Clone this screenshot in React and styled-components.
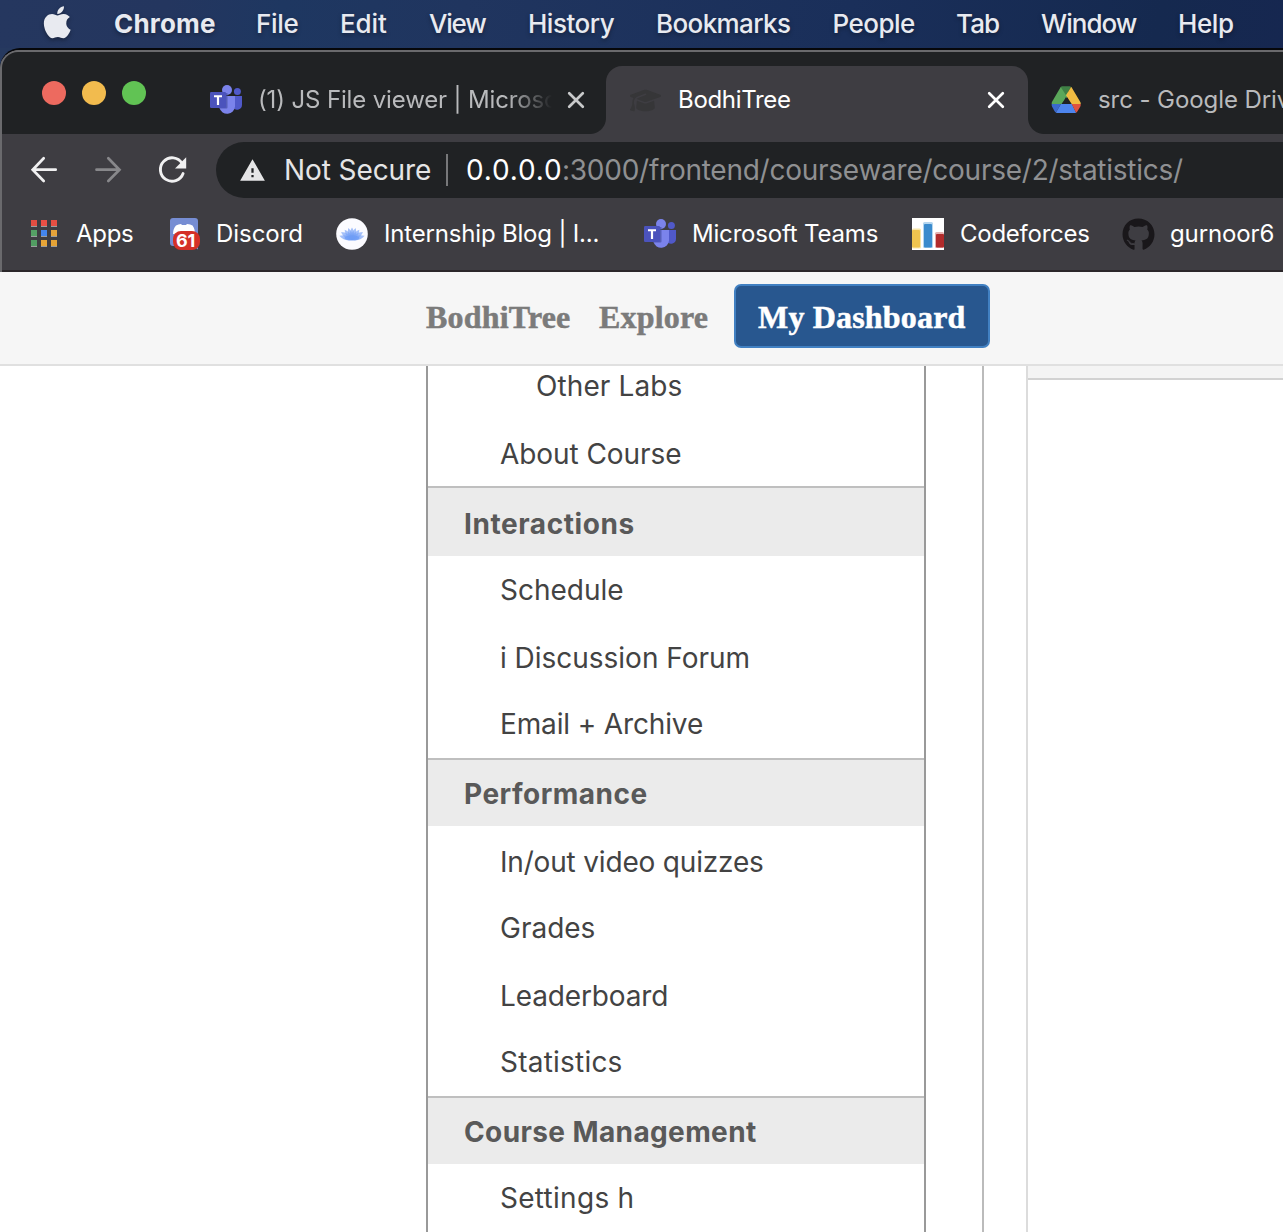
import React from 'react';
import styled, { createGlobalStyle } from 'styled-components';
import { FaApple, FaGithub } from 'react-icons/fa';
import { FaGraduationCap } from 'react-icons/fa6';
import { MdWarning } from 'react-icons/md';

const GlobalStyle = createGlobalStyle`
  *, *::before, *::after { box-sizing: border-box; }
  html, body { margin: 0; height: 1232px; overflow: hidden; }
  body { background: #fff; font-family: Inter, "Liberation Sans", sans-serif; -webkit-font-smoothing: antialiased; }
`;

const Screen = styled.div`
  width: 1283px;
  height: 1232px;
  overflow: hidden;
  display: flex;
  flex-direction: column;
`;

/* ---------- system menu bar ---------- */
const MenuBar = styled.header`
  flex: none;
  height: 48px;
  display: flex;
  align-items: center;
  padding-left: 39px;
  color: #e8eaf0;
  background: linear-gradient(100deg, #25375f 0%, #24365f 13%, #1e3761 22%, #20355f 36%, #1a2f5a 66%, #15294f 90%, #162750 100%);
`;

const AppleSlot = styled.div`
  flex: none;
  width: 75px;
  height: 48px;
  padding-top: 4px;
  svg { display: block; filter: drop-shadow(0 2px 2px rgba(0, 0, 0, 0.35)); }
`;

const MenuItem = styled.span`
  flex: none;
  width: ${(p) => p.$w}px;
  white-space: nowrap;
  font-size: 26px;
  line-height: 48px;
  height: 48px;
  font-weight: ${(p) => (p.$strong ? 700 : 500)};
  letter-spacing: ${(p) => p.$ls}px;
  text-shadow: 0 2px 4px rgba(0, 0, 0, 0.35);
`;

/* ---------- browser window ---------- */
const Backdrop = styled.div`
  flex: 1;
  min-height: 0;
  display: flex;
  background: #26395f;
`;

const BrowserWindow = styled.div`
  flex: 1;
  min-width: 0;
  display: flex;
  flex-direction: column;
  border-top: 2px solid #06070a;
  border-top-left-radius: 20px;
  background: #68686b;
  overflow: hidden;
`;

const Chrome = styled.div`
  flex: none;
  height: 222px;
  padding: 2px 0 0 2px;
  display: flex;
  flex-direction: column;
  background: #6a6a6d;
  border-top-left-radius: 18px;
`;

const TabStrip = styled.div`
  flex: none;
  height: 82px;
  display: flex;
  align-items: flex-end;
  background: #202224;
  border-top-left-radius: 16px;
  overflow: hidden;
`;

const TrafficLights = styled.div`
  flex: none;
  width: 208px;
  height: 82px;
  padding: 29px 0 0 40px;
  display: flex;
  gap: 16px;
`;

const Light = styled.i`
  width: 24px;
  height: 24px;
  border-radius: 50%;
  background: ${(p) => p.$color};
`;

const Tab = styled.div`
  flex: none;
  width: ${(p) => p.$w}px;
  height: 68px;
  display: flex;
  align-items: center;
  color: ${(p) => (p.$active ? '#fff' : '#b9babc')};
  background: ${(p) => (p.$active ? '#3e3d42' : 'transparent')};
  border-radius: 16px 16px 0 0;
  padding-left: ${(p) => p.$pl}px;
`;

const Flare = styled.i`
  flex: none;
  align-self: flex-end;
  width: 16px;
  height: 16px;
  background: radial-gradient(circle at ${(p) => (p.$right ? '100% 0' : '0 0')}, transparent 15.5px, #3e3d42 16.5px);
`;

const TabTitle = styled.span`
  flex: none;
  width: ${(p) => p.$w}px;
  overflow: hidden;
  white-space: nowrap;
  font-size: 24px;
  line-height: 40px;
  letter-spacing: ${(p) => p.$ls}px;
  margin-left: ${(p) => p.$ml}px;
  ${(p) => p.$fade && 'mask-image: linear-gradient(90deg, #000 calc(100% - 44px), transparent 100%);'}
`;

const CloseIcon = styled.svg`
  flex: none;
  display: block;
  width: 18px;
  height: 18px;
  margin-left: ${(p) => p.$ml}px;
`;

const Toolbar = styled.div`
  flex: none;
  height: 72px;
  display: flex;
  align-items: center;
  padding-left: 20px;
  background: #3e3d42;
`;

const NavButton = styled.span`
  flex: none;
  width: 64px;
  height: 44px;
  display: flex;
  align-items: center;
  padding-left: ${(p) => p.$pl}px;
  color: ${(p) => (p.$dim ? '#88888b' : '#f0f0f1')};
`;

const Omnibox = styled.div`
  flex: 1;
  height: 56px;
  margin-left: 2px;
  padding-left: 23px;
  display: flex;
  align-items: center;
  border-radius: 28px 0 0 28px;
  background: #202224;
  font-size: 28px;
  line-height: 57px;
  white-space: nowrap;
  color: #e5e5e6;
`;

const Security = styled.span`
  width: 152px;
  margin-left: 18px;
  letter-spacing: -0.09px;
`;

const Divider = styled.i`
  width: 2px;
  height: 32px;
  margin: 0 18px 0 10px;
  background: #77787a;
`;

const Host = styled.span`
  flex: none;
  width: 96px;
  color: #fff;
  letter-spacing: 0.85px;
`;

const Path = styled.span`
  color: #8f9092;
  letter-spacing: -0.25px;
`;

const Bookmarks = styled.div`
  flex: none;
  height: 66px;
  display: flex;
  padding-left: 28px;
  background: #3e3d42;
  border-bottom: 2px solid #2b272a;
`;

const Bookmark = styled.div`
  flex: none;
  width: ${(p) => p.$w}px;
  height: 56px;
  display: flex;
  align-items: center;
  gap: ${(p) => p.$gap || 16}px;
  color: #fff;
  white-space: nowrap;
  svg { flex: none; display: block; }
`;

const BookmarkLabel = styled.span`
  height: 56px;
  font-size: 24px;
  line-height: 56px;
  letter-spacing: ${(p) => p.$ls}px;
`;

/* ---------- page ---------- */
const Page = styled.main`
  flex: 1;
  min-height: 0;
  display: flex;
  flex-direction: column;
  background: #fff;
`;

const SiteNav = styled.nav`
  flex: none;
  height: 94px;
  padding: 12px 0 0 426px;
  display: flex;
  align-items: flex-start;
  background: #f6f6f6;
  border-bottom: 2px solid #e0e0e0;
  font-family: "Liberation Serif", "Times New Roman", serif;
  font-weight: 700;
  font-size: 32px;
  line-height: 66px;
  color: #7b7b7b;
  white-space: nowrap;
`;

const SiteLink = styled.span`
  flex: none;
  width: ${(p) => p.$w}px;
  letter-spacing: 0.18px;
  -webkit-text-stroke: 0.5px currentColor;
`;

const DashboardButton = styled.span`
  flex: none;
  width: 256px;
  height: 64px;
  padding-left: 22px;
  border: 2px solid #4180c2;
  border-radius: 7px;
  background: #28578f;
  color: #fff;
  line-height: 62px;
  letter-spacing: 0.18px;
  -webkit-text-stroke: 0.5px currentColor;
`;

const Columns = styled.div`
  flex: 1;
  min-height: 0;
  display: flex;
  padding-left: 426px;
`;

const Sidebar = styled.aside`
  flex: none;
  width: 500px;
  display: flex;
  flex-direction: column;
  border-left: 2px solid #999;
  border-right: 2px solid #999;
`;

const SideLink = styled.span`
  flex: none;
  height: ${(p) => p.$h}px;
  padding-left: ${(p) => (p.$sub ? 108 : 72)}px;
  padding-top: ${(p) => p.$pt}px;
  font-size: 28px;
  line-height: 40px;
  letter-spacing: ${(p) => p.$ls}px;
  color: #434343;
  white-space: nowrap;
`;

const SideHeading = styled.strong`
  flex: none;
  height: ${(p) => p.$h}px;
  padding-left: 36px;
  padding-top: ${(p) => p.$pt}px;
  border-top: 2px solid #bfbfbf;
  background: #ebebeb;
  font-size: 28px;
  line-height: 40px;
  font-weight: 700;
  letter-spacing: ${(p) => p.$ls}px;
  color: #595959;
  white-space: nowrap;
`;

const Content = styled.section`
  flex: 1;
  display: flex;
  margin-left: 56px;
  padding-left: 42px;
  border-left: 2px solid #bbb;
`;

const Panel = styled.div`
  flex: 1;
  border-left: 2px solid #dcdcdc;
`;

const PanelHeader = styled.div`
  height: 14px;
  background: #f4f4f4;
  border-bottom: 2px solid #d2d2d2;
`;

/* ---------- icons ---------- */
const Teams = () => (
  <svg width="32" height="32" viewBox="0 0 32 32">
    <circle cx="27.4" cy="7.4" r="3.5" fill="#5059c9" />
    <path d="M23 12h9v8.8a5 5 0 0 1-9 3z" fill="#5059c9" />
    <circle cx="17" cy="6" r="5" fill="#7b83eb" />
    <path d="M9.5 12H25v10.5a7.9 7.9 0 0 1-15.500 1.500z" fill="#7b83eb" />
    <path d="M9 9h8.500v14.500a1 1 0 0 1-1 1H9.500z" fill="#4750a4" opacity="0.7" />
    <rect y="8" width="16" height="16" rx="1.300" fill="#4b53bc" />
    <path d="M4 11.300h8v2H9.100V21H6.900v-7.700H4z" fill="#fff" />
  </svg>
);

const Drive = () => (
  <svg width="30" height="28" viewBox="0 0 30 28">
    <path d="M9.700 1h5.300l2.900 8.500-7.400 8.500H.7c-.2-.8 0-1.500.4-2.200z" fill="#5aa75a" />
    <path d="M9.700 1q.6-.7 1.500-.7h7.400q.9 0 1.500.7L15 9.300z" fill="#3f8045" />
    <path d="M20.100 1q.6.300.9.900l8.300 14c.4.700.6 1.400.4 2.100h-9L15 9.300z" fill="#f0bb42" />
    <path d="M.7 18h9.200l-5 8.500c-.6-.3-1-.7-1.300-1.200l-2.500-4.500Q.5 19.700.7 18z" fill="#3b69cd" />
    <path d="M9.900 18h11l4.200 8.700q-.6.300-1.400.3H6.600q-1 0-1.700-.5z" fill="#4d84ed" />
    <path d="M20.700 18h9q.2 1.500-.5 2.700l-2.700 4.600q-.5.900-1.400 1.400z" fill="#df5340" />
    <path d="M15 11l4.200 7h-8.400z" fill="#202224" />
  </svg>
);

const APP_COLORS = ['#e34d42', '#ea4f45', '#e64f43', '#55a065', '#4385ee', '#e5a33a', '#519d62', '#e7a537', '#e5a336'];
const Apps = () => (
  <svg width="28" height="28" viewBox="0 0 28 28">
    {APP_COLORS.map((c, i) => (
      <g key={i}>
        <rect x={1 + (i % 3) * 10} y={Math.floor(i / 3) * 10} width="6" height="7" fill="#9b9d9e" />
        <rect x={1 + (i % 3) * 10} y={Math.floor(i / 3) * 10} width="6" height="6" fill={c} />
      </g>
    ))}
  </svg>
);

const DiscordBadge = () => (
  <svg width="32" height="32" viewBox="0 0 32 32">
    <path d="M5 0h22a3 3 0 0 1 3 3v28.500l-5-3.500H5a3 3 0 0 1-3-3V3a3 3 0 0 1 3-3z" fill="#768dd3" />
    <path d="M8 7.500q2.500-1.500 5-1.500l1 1h4l1-1q3.500 0 5.500 1.500 2.500 3 2.500 8.500H5q0-5.500 3-8.500z" fill="#fff" />
    <rect x="5" y="13" width="27" height="19" rx="8" fill="#d43027" />
    <text x="17.500" y="29" textAnchor="middle" fontFamily="Inter, sans-serif" fontWeight="700" fontSize="18" letterSpacing="-0.2" fill="#fff">61</text>
  </svg>
);

const PETALS = [[-74, 1.1], [74, 1.1], [-56, 1.1], [56, 1.1], [-37, 1.02], [37, 1.02], [-18, 1], [18, 1], [0, 1]];
const Lotus = () => (
  <svg width="32" height="32" viewBox="0 0 32 32">
    <defs>
      <linearGradient id="petal" x1="0" y1="0" x2="0" y2="1">
        <stop offset="0" stopColor="#8fb2f8" />
        <stop offset="1" stopColor="#6394f5" />
      </linearGradient>
    </defs>
    <circle cx="16" cy="16" r="15.800" fill="#fbfbff" />
    {PETALS.map(([a, k]) => (
      <path key={a} transform={`translate(16 21.500) rotate(${a}) scale(${k})`} d="M0 .8C-3-3-2.600-8 0-12 2.600-8 3-3 0 .8z" fill="url(#petal)" fillOpacity="0.75" />
    ))}
    <ellipse cx="16" cy="20" rx="7.500" ry="2.600" fill="#6f9df6" opacity="0.8" />
  </svg>
);

const Codeforces = () => (
  <svg width="32" height="32" viewBox="0 0 32 32">
    <rect width="32" height="32" fill="#fff" />
    <rect x="0" y="10.500" width="9" height="20" rx="1.500" fill="#f8e6a9" />
    <rect x="0" y="12" width="8" height="17.500" rx="1" fill="#efc44f" />
    <rect x="11" y="4" width="10" height="26" rx="1.500" fill="#b5d6ef" />
    <rect x="12" y="6" width="8" height="23.500" rx="1" fill="#3b8bcd" />
    <rect x="23" y="14" width="9" height="16" rx="1.500" fill="#e5b1b0" />
    <rect x="24" y="16" width="8" height="13.500" rx="1" fill="#b12b2b" />
  </svg>
);

const Close = ({ offset, color }) => (
  <CloseIcon viewBox="0 0 18 18" $ml={offset} fill="none" stroke={color} strokeWidth="2.700" strokeLinecap="round">
    <path d="M2.200 2.200 15.800 15.800M15.800 2.200 2.200 15.800" />
  </CloseIcon>
);

const Arrow = ({ forward }) => (
  <svg width="28" height="28" viewBox="0 0 28 28" fill="none" stroke="currentColor" strokeWidth="2.700" strokeLinecap="round">
    <path d={forward ? 'M2.500 13.700H25M14.300 2.300 25.500 13.700 14.300 25' : 'M25.700 13.700H3M13.700 2.300 2.700 13.700 13.700 25'} />
  </svg>
);

const Reload = () => (
  <svg width="30" height="30" viewBox="0 0 30 30" fill="none">
    <path d="M24 8.300A11.700 11.700 0 1 0 25.100 18.500" stroke="currentColor" strokeWidth="2.900" strokeLinecap="round" />
    <path d="M28.200 2.300V13.400H17z" fill="currentColor" />
  </svg>
);

/* ---------- data ---------- */
const MENU = [
  ['Chrome', 142, 0.19, true],
  ['File', 84, -0.3],
  ['Edit', 89, -0.1],
  ['View', 99, -1.2],
  ['History', 128, -0.5],
  ['Bookmarks', 176.5, -0.61],
  ['People', 123.5, -0.52],
  ['Tab', 85, -0.9],
  ['Window', 137, -0.95],
  ['Help', 100, -0.4],
];

const SIDE = [
  { text: 'Other Labs', h: 54, pt: 0, ls: 0.1, sub: true },
  { text: 'About Course', h: 66, pt: 14, ls: -0.07 },
  { text: 'Interactions', h: 70, pt: 16, ls: 0.57, heading: true },
  { text: 'Schedule', h: 68, pt: 14, ls: 0 },
  { text: 'i Discussion Forum', h: 66, pt: 14, ls: -0.02 },
  { text: 'Email + Archive', h: 68, pt: 14, ls: -0.14 },
  { text: 'Performance', h: 68, pt: 14, ls: 0.49, heading: true },
  { text: 'In/out video quizzes', h: 68, pt: 16, ls: -0.18 },
  { text: 'Grades', h: 68, pt: 14, ls: 0 },
  { text: 'Leaderboard', h: 66, pt: 14, ls: -0.14 },
  { text: 'Statistics', h: 68, pt: 14, ls: 0.22 },
  { text: 'Course Management', h: 68, pt: 14, ls: 0.39, heading: true },
  { text: 'Settings h', h: 68, pt: 14, ls: 0.28 },
];

export default function App() {
  return (
    <>
      <GlobalStyle />
      <Screen>
        <MenuBar>
          <AppleSlot><FaApple size={36.500} /></AppleSlot>
          {MENU.map(([label, w, ls, strong]) => (
            <MenuItem key={label} $w={w} $ls={ls} $strong={strong}>{label}</MenuItem>
          ))}
        </MenuBar>
        <Backdrop>
          <BrowserWindow>
            <Chrome>
              <TabStrip>
                <TrafficLights>
                  <Light $color="#ed6a5f" />
                  <Light $color="#f2bb4e" />
                  <Light $color="#61c354" />
                </TrafficLights>
                <Tab $w={380} $pl={0}>
                  <Teams />
                  <TabTitle $w={294} $ls={-0.14} $ml={16} $fade>(1) JS File viewer | Microso</TabTitle>
                  <Close offset={15} color="#c8c9ca" />
                </Tab>
                <Flare />
                <Tab $active $w={422} $pl={24}>
                  <FaGraduationCap size={31} color="#363638" />
                  <TabTitle $w={150} $ls={-0.32} $ml={17}>BodhiTree</TabTitle>
                  <Close offset={159} color="#fff" />
                </Tab>
                <Flare $right />
                <Tab $w={239} $pl={7}>
                  <Drive />
                  <TabTitle $w={185} $ls={-0.08} $ml={17}>src - Google Driv</TabTitle>
                </Tab>
              </TabStrip>
              <Toolbar>
                <NavButton $pl={8}><Arrow /></NavButton>
                <NavButton $pl={8} $dim><Arrow forward /></NavButton>
                <NavButton $pl={8}><Reload /></NavButton>
                <Omnibox>
                  <MdWarning size={27} />
                  <Security>Not Secure</Security>
                  <Divider />
                  <Host>0.0.0.0</Host>
                  <Path>:3000/frontend/courseware/course/2/statistics/</Path>
                </Omnibox>
              </Toolbar>
              <Bookmarks>
                <Bookmark $w={138} $gap={18}><Apps /><BookmarkLabel $ls={-0.3}>Apps</BookmarkLabel></Bookmark>
                <Bookmark $w={168}><DiscordBadge /><BookmarkLabel $ls={-0.05}>Discord</BookmarkLabel></Bookmark>
                <Bookmark $w={308}><Lotus /><BookmarkLabel $ls={-0.18}>Internship Blog | I...</BookmarkLabel></Bookmark>
                <Bookmark $w={268}><Teams /><BookmarkLabel $ls={-0.19}>Microsoft Teams</BookmarkLabel></Bookmark>
                <Bookmark $w={210}><Codeforces /><BookmarkLabel $ls={-0.25}>Codeforces</BookmarkLabel></Bookmark>
                <Bookmark $w={161} $gap={15}><FaGithub size={33} color="#19171a" /><BookmarkLabel $ls={-0.12}>gurnoor6</BookmarkLabel></Bookmark>
              </Bookmarks>
            </Chrome>
            <Page>
              <SiteNav>
                <SiteLink $w={173}>BodhiTree</SiteLink>
                <SiteLink $w={135}>Explore</SiteLink>
                <DashboardButton>My Dashboard</DashboardButton>
              </SiteNav>
              <Columns>
                <Sidebar>
                  {SIDE.map((s) =>
                    s.heading ? (
                      <SideHeading key={s.text} $h={s.h} $pt={s.pt} $ls={s.ls}>{s.text}</SideHeading>
                    ) : (
                      <SideLink key={s.text} $h={s.h} $pt={s.pt} $ls={s.ls} $sub={s.sub}>{s.text}</SideLink>
                    )
                  )}
                </Sidebar>
                <Content>
                  <Panel><PanelHeader /></Panel>
                </Content>
              </Columns>
            </Page>
          </BrowserWindow>
        </Backdrop>
      </Screen>
    </>
  );
}
